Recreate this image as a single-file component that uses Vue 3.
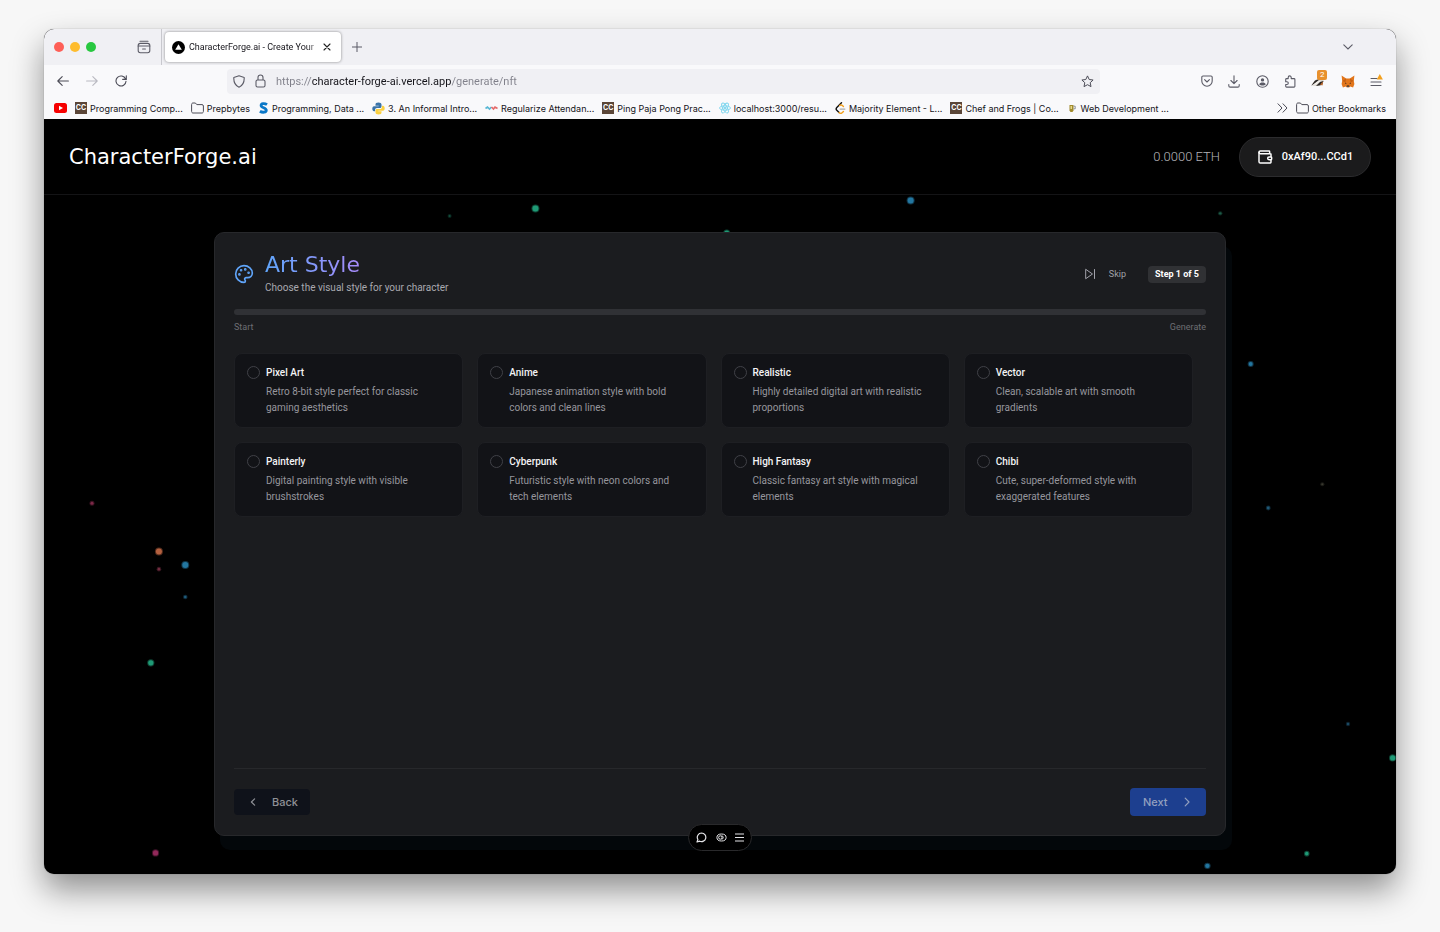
<script setup>
import { ref } from 'vue'

const url = ref('https://character-forge-ai.vercel.app/generate/nft')
const selected = ref('')

const bookmarks = [
  { icon: 'youtube', label: '' },
  { icon: 'cc', label: 'Programming Comp...' },
  { icon: 'folder', label: 'Prepbytes' },
  { icon: 's', label: 'Programming, Data ...' },
  { icon: 'python', label: '3. An Informal Intro...' },
  { icon: 'wave', label: 'Regularize Attendan...' },
  { icon: 'cc', label: 'Ping Paja Pong Prac...' },
  { icon: 'react', label: 'localhost:3000/resu...' },
  { icon: 'leet', label: 'Majority Element - L...' },
  { icon: 'cc', label: 'Chef and Frogs | Co...' },
  { icon: 'cup', label: 'Web Development ...' }
]

const styles = [
  { name: 'Pixel Art', text: 'Retro 8-bit style perfect for classic gaming aesthetics' },
  { name: 'Anime', text: 'Japanese animation style with bold colors and clean lines' },
  { name: 'Realistic', text: 'Highly detailed digital art with realistic proportions' },
  { name: 'Vector', text: 'Clean, scalable art with smooth gradients' },
  { name: 'Painterly', text: 'Digital painting style with visible brushstrokes' },
  { name: 'Cyberpunk', text: 'Futuristic style with neon colors and tech elements' },
  { name: 'High Fantasy', text: 'Classic fantasy art style with magical elements' },
  { name: 'Chibi', text: 'Cute, super-deformed style with exaggerated features' }
]

const green = '#1f9a76'
const blue = '#23769f'
const particles = [
  { x: 36.35, y: 2, r: 3, c: green },
  { x: 30, y: 3.1, r: 1, c: '#14503f' },
  { x: 64.1, y: 0.8, r: 3, c: blue },
  { x: 87, y: 2.7, r: 1.2, c: '#1d5b48' },
  { x: 50.5, y: 5.6, r: 2.5, c: green },
  { x: 89.25, y: 24.9, r: 2, c: blue },
  { x: 3.55, y: 45.4, r: 1.5, c: '#7d2948' },
  { x: 8.5, y: 52.5, r: 3, c: '#b4603f' },
  { x: 8.5, y: 55.1, r: 1.3, c: '#722c40' },
  { x: 10.45, y: 54.5, r: 3, c: blue },
  { x: 10.45, y: 59.2, r: 1.3, c: '#1f5c7c' },
  { x: 7.9, y: 68.9, r: 2.6, c: green },
  { x: 8.25, y: 96.9, r: 2.6, c: '#92295a' },
  { x: 94.55, y: 42.6, r: 1.1, c: '#38382f' },
  { x: 90.55, y: 46.1, r: 1.4, c: '#1f5876' },
  { x: 96.45, y: 77.9, r: 1.2, c: '#1c4a64' },
  { x: 99.75, y: 82.9, r: 2.6, c: green },
  { x: 86.05, y: 98.8, r: 2.2, c: blue },
  { x: 93.4, y: 97, r: 1.8, c: green },
  { x: 87.4, y: 90, r: 1.2, c: '#163d55' }
]
</script>

<template>
  <div class="window">
    <div class="tabbar">
      <div class="lights"><i class="red"></i><i class="amber"></i><i class="lime"></i></div>
      <button class="plain view" aria-label="Recent browsing">
        <svg width="14" height="14" viewBox="0 0 14 14" fill="none" stroke="#5b5b66" stroke-width="1.1" stroke-linecap="round"><path d="M3 1.200h8" /><rect x="1.200" y="3.400" width="11.600" height="9.400" rx="2.200" /><path d="M1.200 6h11.600M5.600 9h2.800" /></svg>
      </button>
      <div class="tab">
        <svg width="13" height="13" viewBox="0 0 13 13"><circle cx="6.5" cy="6.5" r="6.5" fill="#000" /><path d="M6.5 3.2 9.8 8.8H3.2z" fill="#fff" /></svg>
        <span class="tab-title">CharacterForge.ai - Create Your</span>
        <button class="plain" aria-label="Close tab">
          <svg width="8" height="8" viewBox="0 0 8 8" stroke="#222" stroke-width="1.1" stroke-linecap="round"><path d="M1 1l6 6M7 1 1 7" /></svg>
        </button>
      </div>
      <button class="plain plus" aria-label="New tab">
        <svg width="10" height="10" viewBox="0 0 10 10" stroke="#5b5b66" stroke-width="1"><path d="M5 0v10M0 5h10" /></svg>
      </button>
      <button class="plain tabs-menu" aria-label="List all tabs">
        <svg width="10" height="6" viewBox="0 0 10 6" fill="none" stroke="#5b5b66" stroke-width="1.1" stroke-linecap="round"><path d="M.8.8 5 5 9.2.8" /></svg>
      </button>
    </div>

    <div class="navbar">
      <div class="history">
        <button class="plain" aria-label="Back">
          <svg width="12" height="12" viewBox="0 0 12 12" fill="none" stroke="#4c4c57" stroke-width="1.1" stroke-linecap="round" stroke-linejoin="round"><path d="M11.4 6H.8M5.2 1.6.8 6l4.4 4.4" /></svg>
        </button>
        <button class="plain" aria-label="Forward">
          <svg width="12" height="12" viewBox="0 0 12 12" fill="none" stroke="#b9b9c1" stroke-width="1.1" stroke-linecap="round" stroke-linejoin="round"><path d="M.6 6h10.6M6.8 1.6 11.2 6l-4.4 4.4" /></svg>
        </button>
        <button class="plain" aria-label="Reload">
          <svg width="12" height="12" viewBox="0 0 12 12" fill="none" stroke="#4c4c57" stroke-width="1.1" stroke-linecap="round"><path d="M10.6 4A5 5 0 1 0 11 6.2M11.3.8v3.6H7.7" /></svg>
        </button>
      </div>
      <div class="address">
        <svg width="12" height="13" viewBox="0 0 12 13" fill="none" stroke="#5b5b66" stroke-width="1.1" stroke-linejoin="round"><path d="M6 .8 11.2 2.6C11.4 7 9.6 10.600 6 12.200 2.400 10.600.6 7 .8 2.600z" /></svg>
        <svg width="11" height="14" viewBox="0 0 11 14" fill="none" stroke="#5b5b66" stroke-width="1.1"><rect x="1" y="6" width="9" height="7" rx="1.500" /><path d="M3 6V3.500a2.500 2.500 0 0 1 5 0V6" /></svg>
        <input v-model="url" class="url" type="text" aria-label="Address" />
        <button class="plain" aria-label="Bookmark this page">
          <svg width="13" height="13" viewBox="0 0 13 13" fill="none" stroke="#4c4c57" stroke-width="1" stroke-linejoin="round"><path d="M6.500.9 8.200 4.500l3.900.5-2.900 2.700.8 3.900-3.500-1.900L3 11.600l.8-3.900L.9 5l3.900-.5z" /></svg>
        </button>
      </div>
      <div class="tools">
        <button class="plain" aria-label="Save to Pocket">
          <svg width="12" height="12" viewBox="0 0 12 12" fill="none" stroke="#5b5b66" stroke-width="1.1" stroke-linecap="round" stroke-linejoin="round"><path d="M2 1h8a1.200 1.200 0 0 1 1.200 1.200V6A5.200 5.200 0 0 1 .8 6V2.200A1.200 1.200 0 0 1 2 1z" /><path d="M3.600 4.700 6 7l2.400-2.300" /></svg>
        </button>
        <button class="plain" aria-label="Downloads">
          <svg width="12" height="13" viewBox="0 0 12 13" fill="none" stroke="#5b5b66" stroke-width="1.100" stroke-linecap="round" stroke-linejoin="round"><path d="M6 .8v7.600M2.900 5.500 6 8.600l3.100-3.100M.8 9.500v1.200c0 .8.600 1.400 1.400 1.400h7.600c.8 0 1.400-.6 1.400-1.400V9.500" /></svg>
        </button>
        <button class="plain" aria-label="Account">
          <svg width="13" height="13" viewBox="0 0 13 13"><circle cx="6.500" cy="6.500" r="5.700" fill="none" stroke="#5b5b66" stroke-width="1.100" /><circle cx="6.500" cy="4.900" r="1.700" fill="#5b5b66" /><path d="M3.300 9.400C3.600 7.900 4.800 7.400 6.500 7.400s2.900.5 3.200 2c-1.600 1.500-4.800 1.500-6.400 0z" fill="#5b5b66" /></svg>
        </button>
        <button class="plain" aria-label="Extensions">
          <svg width="12" height="13" viewBox="0 0 12 13" fill="none" stroke="#5b5b66" stroke-width="1.100" stroke-linejoin="round"><path d="M4.200 3.600V2.400a1.500 1.500 0 0 1 3 0v1.200H10c.6 0 .9.300.9.900v6.700c0 .6-.3.900-.9.900H2.600c-.6 0-.9-.3-.9-.9V9.500h1.200a1.400 1.400 0 0 0 0-2.800H1.700V4.500c0-.6.300-.9.900-.9z" /></svg>
        </button>
        <button class="plain badge-host" aria-label="Privacy Badger">
          <svg width="14" height="12" viewBox="0 0 14 12"><path d="M.5 10.500 3 6.500 8 2l5 2-1.500 5L7 11z" fill="#d9d4cc" /><path d="M.3 10.600 4 5.500 8.500 4 5 8zM5 11l4-4 3.500-1-1.500 4z" fill="#2a2624" /><path d="M1.500 10 6 6.500l4-1-4.500 4z" fill="#f4f1ec" /><path d="M9 9.500l3-3-.5 4z" fill="#c06a2c" /></svg>
          <span class="badge">2</span>
        </button>
        <button class="plain" aria-label="MetaMask">
          <svg width="14" height="13" viewBox="0 0 14 13"><path d="M.6.600 5.200 3.400h3.600L13.400.6 12.800 6l.6 3-1.300 3.400-2.900-.8-1.100.9H5.900l-1.100-.9-2.900.8L.6 9l.6-3z" fill="#e2761b" /><path d="M5.200 3.400 1.200 6l3.200 1.200zM8.800 3.400l4 2.600-3.200 1.200z" fill="#c45f12" /><path d="M4 7.600l1.800.9-1.500.3zM10 7.600l-1.800.9 1.500.3zM5.800 10.500h2.400v1.400H5.800z" fill="#2b2320" /><path d="M6 11.800h2v.7H6z" fill="#d5bfb2" /></svg>
        </button>
        <button class="plain" aria-label="Application menu">
          <svg width="13" height="14" viewBox="0 0 13 14"><path d="M1 4.500h6M1 8h10M1 11.500h10" stroke="#5b5b66" stroke-width="1.100" stroke-linecap="round" /><path d="M9.800 0 12.900 5.400H6.700z" fill="#f2a01e" /></svg>
        </button>
      </div>
    </div>

    <div class="bookmarks">
      <a v-for="(b, i) in bookmarks" :key="i" href="#" class="bookmark" :aria-label="b.label || 'YouTube'">
        <svg v-if="b.icon === 'youtube'" width="13" height="10" viewBox="0 0 13 10"><rect width="13" height="10" rx="2.500" fill="#f60000" /><path d="M5 2.800 9 5 5 7.200z" fill="#fff" /></svg>
        <span v-else-if="b.icon === 'cc'" class="cc">CC</span>
        <svg v-else-if="b.icon === 'folder'" width="13" height="12" viewBox="0 0 13 12" fill="none" stroke="#4c4c57"><path d="M.6 2.500C.6 1.500 1.200 1 2 1h2.400l1.400 1.600H11c.8 0 1.400.5 1.400 1.400v5.500c0 .9-.6 1.500-1.400 1.500H2C1.200 11 .6 10.400.6 9.500z" /></svg>
        <svg v-else-if="b.icon === 's'" width="11" height="12" viewBox="0 0 11 12" fill="none" stroke="#0b78c8" stroke-width="2.800"><path d="M9 2.700C6.500.9 3.100 1.400 3.100 3.500c0 2.500 5.200 2 5.200 4.700 0 2.200-3.700 2.700-6.400 1" /></svg>
        <svg v-else-if="b.icon === 'python'" width="13" height="13" viewBox="0 0 13 13"><path d="M6.400.4c-2.200 0-2.900.8-2.900 2v1.300h3.200v.6H2C.9 4.300.3 5.200.3 6.700c0 1.600.8 2.500 1.700 2.500h1.100V7.800c0-1 .8-1.800 1.900-1.800h3c.9 0 1.500-.7 1.500-1.500V2.400c0-1.200-1-2-3.100-2z" fill="#3b74a8" /><path d="M6.600 12.600c2.200 0 2.900-.8 2.900-2V9.300H6.300v-.6H11c1.100 0 1.700-.9 1.700-2.400 0-1.600-.8-2.500-1.700-2.500H9.900v1.400C9.900 6.200 9.100 7 8 7H5c-.9 0-1.500.7-1.500 1.500v2.100c0 1.200 1 2 3.100 2z" fill="#fbd03f" /></svg>
        <svg v-else-if="b.icon === 'wave'" width="13" height="6" viewBox="0 0 13 6" fill="none" stroke-width="1.600"><path d="M.5 3.500 2.500 2l2 2 2-2" stroke="#58b7d4" /><path d="M6.500 2l2 2 1.500-2 2.500 1.500" stroke="#e56a6a" /></svg>
        <svg v-else-if="b.icon === 'react'" width="12" height="12" viewBox="0 0 12 12" fill="none" stroke="#7fd6ee" stroke-width=".9"><ellipse cx="6" cy="6" rx="5.500" ry="2.200" /><ellipse cx="6" cy="6" rx="5.500" ry="2.200" transform="rotate(60 6 6)" /><ellipse cx="6" cy="6" rx="5.500" ry="2.200" transform="rotate(120 6 6)" /><circle cx="6" cy="6" r="1" fill="#7fd6ee" /></svg>
        <svg v-else-if="b.icon === 'leet'" width="11" height="12" viewBox="0 0 11 12" fill="none" stroke-width="1.400" stroke-linecap="round"><path d="M6.500.8 1.800 5.600c-.8.8-.8 1.800 0 2.600l2.300 2.400" stroke="#111" /><path d="M4.100 10.600c.9.900 2.400.9 3.300 0l1-1M4.600 3.600c.9-.9 2-.8 2.800 0l1 1" stroke="#f2a01e" /><path d="M5.200 7.100h4.600" stroke="#aaa" /></svg>
        <svg v-else width="11" height="9" viewBox="0 0 11 9"><path d="M2.500 1h4v5.500L5.500 8h-2l-1-1.500z" fill="#a08a2c" /><path d="M6.500 2.200h1.700v2.600H6.500" fill="none" stroke="#8b8f94" /><path d="M3.500 2h1.500v3H3.500z" fill="#e7d98b" /></svg>
        <span v-if="b.label">{{ b.label }}</span>
      </a>
      <button class="plain more" aria-label="More bookmarks">
        <svg width="11" height="10" viewBox="0 0 11 10" fill="none" stroke="#4c4c57" stroke-width="1" stroke-linecap="round"><path d="M1 .8 5 5 1 9.200M6 .8 10 5 6 9.200" /></svg>
      </button>
      <a href="#" class="bookmark">
        <svg width="13" height="12" viewBox="0 0 13 12" fill="none" stroke="#4c4c57"><path d="M.6 2.500C.6 1.500 1.200 1 2 1h2.400l1.400 1.600H11c.8 0 1.400.5 1.400 1.400v5.500c0 .9-.6 1.500-1.400 1.500H2C1.200 11 .6 10.400.6 9.500z" /></svg>
        <span>Other Bookmarks</span>
      </a>
    </div>

    <header class="site-header">
      <a href="#" class="logo">CharacterForge.ai</a>
      <span class="balance">0.0000 ETH</span>
      <button class="wallet">
        <svg width="16" height="16" viewBox="0 0 24 24" fill="none" stroke="#fff" stroke-width="2.200" stroke-linecap="round" stroke-linejoin="round"><path d="M19 7V4a1 1 0 0 0-1-1H5a2 2 0 0 0 0 4h15a1 1 0 0 1 1 1v4h-3a2 2 0 0 0 0 4h3a1 1 0 0 0 1-1v-2a1 1 0 0 0-1-1" /><path d="M3 5v14a2 2 0 0 0 2 2h15a1 1 0 0 0 1-1v-4" /></svg>
        <span>0xAf90...CCd1</span>
      </button>
    </header>

    <main class="stage">
      <svg class="particles" aria-hidden="true">
        <g v-for="(p, i) in particles" :key="i" :fill="p.c">
          <circle :cx="p.x + '%'" :cy="p.y + '%'" :r="p.r + 1" opacity=".45" />
          <circle :cx="p.x + '%'" :cy="p.y + '%'" :r="p.r" />
        </g>
      </svg>

      <form class="panel" @submit.prevent>
        <div class="panel-head">
          <svg width="20" height="20" viewBox="0 0 24 24" fill="none" stroke="#60a5fa" stroke-width="2" stroke-linecap="round" stroke-linejoin="round"><circle cx="13.500" cy="6.500" r=".6" fill="#60a5fa" /><circle cx="17.500" cy="10.500" r=".6" fill="#60a5fa" /><circle cx="8.500" cy="7.500" r=".6" fill="#60a5fa" /><circle cx="6.500" cy="12.500" r=".6" fill="#60a5fa" /><path d="M12 2C6.500 2 2 6.500 2 12s4.500 10 10 10c.926 0 1.648-.746 1.648-1.688 0-.437-.18-.835-.437-1.125-.29-.289-.438-.652-.438-1.125a1.640 1.640 0 0 1 1.668-1.668h1.996c3.051 0 5.555-2.503 5.555-5.554C21.965 6.012 17.461 2 12 2z" /></svg>
          <div class="heading">
            <h1>Art Style</h1>
            <p>Choose the visual style for your character</p>
          </div>
          <button type="button" class="plain skip">
            <svg width="12" height="12" viewBox="0 0 24 24" fill="none" stroke="#a1a1aa" stroke-width="2" stroke-linecap="round" stroke-linejoin="round"><path d="M4 3l13 9-13 9zM21 3v18" /></svg>
            <span>Skip</span>
          </button>
          <span class="step">Step 1 of 5</span>
        </div>

        <div class="track" role="progressbar" aria-label="Progress" aria-valuenow="0" aria-valuemin="0" aria-valuemax="100"></div>
        <div class="ends"><span>Start</span><span>Generate</span></div>

        <div class="options" role="radiogroup" aria-label="Art Style">
          <label v-for="s in styles" :key="s.name" class="option">
            <input v-model="selected" type="radio" name="art-style" :value="s.name" />
            <span class="option-body">
              <span class="option-name">{{ s.name }}</span>
              <span class="option-text">{{ s.text }}</span>
            </span>
          </label>
        </div>

        <div class="actions">
          <button type="button" class="back">
            <svg width="6" height="8" viewBox="0 0 6 8" fill="none" stroke="currentColor" stroke-width="1.200" stroke-linecap="round" stroke-linejoin="round"><path d="M4.600.8 1.400 4l3.200 3.200" /></svg>
            <span>Back</span>
          </button>
          <button type="submit" class="next">
            <span>Next</span>
            <svg width="6" height="10" viewBox="0 0 6 10" fill="none" stroke="currentColor" stroke-width="1.200" stroke-linecap="round" stroke-linejoin="round"><path d="M1.200 1.200 5 5 1.200 8.800" /></svg>
          </button>
        </div>
      </form>

      <div class="dock">
        <button class="plain" aria-label="Comment">
          <svg width="11" height="11" viewBox="0 0 11 11" fill="none" stroke="#e4e4e7" stroke-width="1.200" stroke-linejoin="round"><path d="M5.600 1a4.300 4.300 0 1 1-1.900 8.200L1 10l.9-2.500A4.300 4.300 0 0 1 5.600 1z" /></svg>
        </button>
        <button class="plain" aria-label="Draft mode">
          <svg width="11" height="9" viewBox="0 0 11 9" fill="none" stroke="#e4e4e7"><ellipse cx="5.500" cy="4.500" rx="4.600" ry="3.500" /><circle cx="4.300" cy="4.500" r="1.700" /><path d="M5.500 2.800a1.700 1.700 0 0 1 0 3.400" /></svg>
        </button>
        <button class="plain" aria-label="Menu">
          <svg width="9" height="9" viewBox="0 0 9 9" stroke="#e4e4e7" stroke-width="1.200"><path d="M0 1h9M0 4.500h9M0 8h9" /></svg>
        </button>
      </div>
    </main>
  </div>
</template>

<style>
body {
  margin: 0;
  background: #f7f7f7;
}
</style>

<style scoped>
* {
  box-sizing: border-box;
}
.window {
  display: flex;
  flex-direction: column;
  min-height: calc(100vh - 87px);
  margin: 29px 44px 58px;
  border-radius: 10px;
  overflow: hidden;
  background: #000;
  font-family: Roboto, "Liberation Sans", sans-serif;
  box-shadow: 0 0 1px rgba(0, 0, 0, 0.5), 0 16px 32px rgba(0, 0, 0, 0.42);
}
svg {
  display: block;
  flex: none;
}
button {
  font: inherit;
  color: inherit;
  border: 0;
  cursor: pointer;
}
.plain {
  display: flex;
  padding: 0;
  background: none;
}
a {
  color: inherit;
  text-decoration: none;
}

/* browser chrome */
.tabbar,
.navbar,
.bookmarks {
  display: flex;
  align-items: center;
  color: #15141a;
}
.tabbar {
  height: 36px;
  background: #f0f0f4;
  padding: 0 43px 0 10px;
}
.lights {
  display: flex;
  gap: 6px;
}
.lights i {
  width: 10px;
  height: 10px;
  border-radius: 50%;
}
.red {
  background: #fe5f57;
}
.amber {
  background: #febc2e;
}
.lime {
  background: #28c840;
}
.view {
  align-items: center;
  height: 36px;
  margin-left: 41px;
  padding-right: 10px;
  border-right: 1px solid #c8c8ce;
}
.tab {
  display: flex;
  align-items: center;
  width: 176px;
  height: 30px;
  margin-left: 3px;
  padding: 0 10px 0 7px;
  border-radius: 4px;
  background: #fff;
  box-shadow: 0 0 3px rgba(0, 0, 0, 0.45);
}
.tab-title {
  flex: 1;
  min-width: 0;
  margin: 0 1px 0 4px;
  overflow: hidden;
  white-space: nowrap;
  font-size: 9px;
  mask-image: linear-gradient(90deg, #000 88%, rgba(0, 0, 0, 0.2));
}
.plus {
  margin-left: 11px;
}
.tabs-menu {
  margin-left: auto;
}
.navbar {
  height: 32px;
  background: #f9f9fb;
  padding: 0 13px;
}
.history {
  display: flex;
  gap: 17px;
  width: 170px;
}
.address {
  display: flex;
  flex: 1;
  align-items: center;
  gap: 10px;
  height: 25px;
  padding: 0 6px;
  border-radius: 4px;
  background: #f0f0f4;
}
.url {
  flex: 1;
  min-width: 0;
  padding: 0;
  border: 0;
  outline: 0;
  font: 11px Roboto, sans-serif;
  color: transparent;
  background: linear-gradient(90deg, #80808a 35px, #15141a 35px, #15141a 175px, #80808a 175px);
  background-clip: text;
  -webkit-background-clip: text;
}
.tools {
  display: flex;
  align-items: center;
  justify-content: space-between;
  width: 182px;
  margin-left: 101px;
}
.badge-host {
  position: relative;
}
.badge {
  position: absolute;
  top: -5px;
  right: -2px;
  width: 10px;
  border-radius: 2px;
  background: #e8912d;
  color: #fff;
  font-size: 8px;
  line-height: 10px;
  text-align: center;
}
.bookmarks {
  gap: 8px;
  height: 22px;
  padding: 0 10px;
  background: #f9f9fb;
  font-family: Inter, sans-serif;
  font-size: 9px;
}
.bookmark {
  display: flex;
  align-items: center;
  gap: 3px;
  white-space: nowrap;
}
.cc {
  width: 12px;
  background: #5b4638;
  color: #fff;
  font-size: 7px;
  font-weight: 700;
  line-height: 12px;
  text-align: center;
}
.more {
  margin-left: auto;
}

/* site */
.site-header {
  display: flex;
  align-items: center;
  height: 76px;
  padding: 0 25px;
  border-bottom: 1px solid #141416;
  color: #fff;
}
.logo {
  flex: 1;
  font: 21px "DejaVu Sans", sans-serif;
}
.balance {
  margin-right: 19px;
  font-size: 13px;
  font-weight: 300;
  color: #b4b4b8;
}
.wallet {
  display: flex;
  align-items: center;
  justify-content: center;
  gap: 9px;
  width: 132px;
  height: 40px;
  border: 1px solid #2c2c2e;
  border-radius: 20px;
  background: #1b1b1c;
  font-size: 11px;
  font-weight: 500;
}
.stage {
  position: relative;
  display: flex;
  flex: 1;
  justify-content: center;
  padding: 37px 24px 38px;
}
.particles {
  position: absolute;
  inset: 0;
  width: 100%;
  height: 100%;
}
.panel {
  position: relative;
  display: flex;
  flex-direction: column;
  width: 100%;
  max-width: 1012px;
  padding: 18px 19px 19px;
  border: 1px solid #27282b;
  border-radius: 10px;
  background: #1b1c1f;
  box-shadow: 6px 14px 0 #03070a;
  color: #a1a1a8;
}
.panel-head {
  display: flex;
  align-items: center;
}
.heading {
  flex: 1;
  margin-left: 11px;
}
h1 {
  width: max-content;
  margin: 0;
  font: 22px/28px "DejaVu Sans", sans-serif;
  color: transparent;
  background: linear-gradient(90deg, #60a5fa, #a78bfa);
  background-clip: text;
  -webkit-background-clip: text;
}
p {
  margin: 0;
  font-size: 10px;
  line-height: 18px;
  color: #a9a9af;
}
.skip {
  align-items: center;
  gap: 13px;
  margin-right: 22px;
  font-size: 9px;
}
.step {
  width: 58px;
  border-radius: 4px;
  background: #303134;
  color: #fff;
  font-size: 9px;
  font-weight: 700;
  line-height: 17px;
  text-align: center;
}
.track {
  height: 6px;
  margin-top: 12px;
  border-radius: 3px;
  background: #303135;
}
.ends {
  display: flex;
  justify-content: space-between;
  margin-top: 5px;
  font-size: 9px;
  line-height: 14px;
  color: #6d6e73;
}
.options {
  display: grid;
  grid-template-columns: repeat(4, 1fr);
  gap: 14px;
  margin: 19px 13px 0 0;
}
.option {
  display: flex;
  gap: 6px;
  padding: 10px 22px 11px 12px;
  border: 1px solid #1e1f23;
  border-radius: 8px;
  background: #121317;
}
.option input {
  flex: none;
  width: 13px;
  height: 13px;
  margin: 2px 0 0;
  appearance: none;
  border: 1px solid #404147;
  border-radius: 50%;
}
.option input:checked {
  background: #60a5fa;
}
.option-body {
  display: flex;
  flex-direction: column;
  gap: 2px;
}
.option-name {
  font-size: 10px;
  font-weight: 500;
  line-height: 18px;
  color: #f4f4f5;
}
.option-text {
  font-size: 10px;
  line-height: 16px;
  color: #96969d;
}
.actions {
  display: flex;
  align-items: center;
  justify-content: space-between;
  margin-top: auto;
  padding-top: 19px;
  border-top: 1px solid #27282b;
  font: 500 11px Inter, sans-serif;
}
.back,
.next {
  display: flex;
  align-items: center;
  justify-content: space-between;
  width: 76px;
  border-radius: 4px;
}
.back {
  height: 26px;
  padding: 0 12px 0 16px;
  background: #0f121a;
  color: #8f9096;
}
.next {
  height: 28px;
  padding: 0 16px 0 13px;
  background: #1d3f8f;
  color: #93a0bf;
}
.dock {
  position: absolute;
  bottom: 23px;
  left: 50%;
  display: flex;
  align-items: center;
  justify-content: space-between;
  width: 64px;
  height: 27px;
  margin-left: -32px;
  padding: 0 7px;
  border: 1px solid #29292b;
  border-radius: 14px;
  background: #000;
}
</style>
